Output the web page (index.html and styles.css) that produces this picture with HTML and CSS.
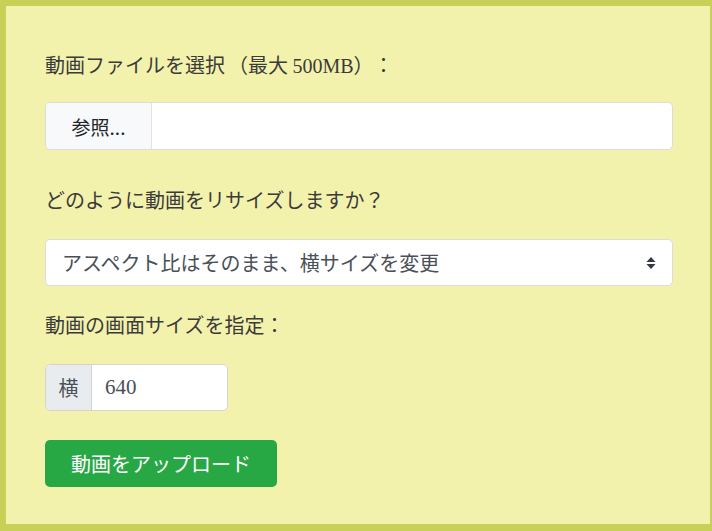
FILE: index.html
```html
<!DOCTYPE html>
<html lang="ja">
<head>
    <meta charset="UTF-8">
    <meta name="viewport" content="width=device-width, initial-scale=1.0">
    <title>動画リサイズ</title>
    <link rel="stylesheet" href="styles.css">
</head>
<body>

<div class="upload-box">
    <form class="upload-form">
        <!-- File -->
        <label class="field-label label-file">動画ファイルを選択<span class="note">（最大 <span class="latin">500MB</span>）</span>：</label>
        <div class="file-input">
            <span class="file-button">参照...</span>
            <span class="file-name"></span>
        </div>

        <!-- Resize mode -->
        <label class="field-label label-mode">どのように動画をリサイズしますか？</label>
        <div class="select-box">
            <span>アスペクト比はそのまま、横サイズを変更</span>
            <svg class="select-arrows" width="10" height="14" viewBox="0 0 10 14">
                <path d="M5 1 L9.5 6 L0.5 6 Z" fill="#343a40"/>
                <path d="M0.5 8 L9.5 8 L5 13 Z" fill="#343a40"/>
            </svg>
        </div>

        <!-- Size -->
        <label class="field-label label-size">動画の画面サイズを指定：</label>
        <div class="size-group">
            <span class="size-prepend">横</span>
            <span class="size-value">640</span>
        </div>

        <button type="button" class="upload-button">動画をアップロード</button>
    </form>
</div>

</body>
</html>
```

FILE: styles.css
```css
body {
    margin: 0;
    font-family: "Noto Sans CJK JP", "Liberation Sans", sans-serif;
    font-size: 20px;
    color: #3b3b3b;
    overflow: hidden;
    text-spacing-trim: space-all;
}

.upload-box {
    height: 531px;
    box-sizing: border-box;
    background-color: #f3f2ad;
    border: 6px solid #c9d057;
    border-right-width: 2px;
    border-bottom-width: 7px;
    padding: 36px 37px 0 39px;
}

.upload-form {
    display: flex;
    flex-direction: column;
    align-items: flex-start;
}

.field-label {
    display: block;
    line-height: 30px;
    height: 30px;
}

.label-file {
    margin-top: 8px;
    margin-bottom: 22px;
}

.label-file .note {
    margin-left: 3px;
}

.label-mode {
    margin-top: 35px;
    margin-bottom: 24px;
}

.label-size {
    margin-top: 24px;
    margin-bottom: 24px;
}

.latin {
    font-family: "Liberation Serif", serif;
}

.file-input {
    display: flex;
    width: 628px;
    height: 48px;
    box-sizing: border-box;
    background-color: #fff;
    border: 1px solid #dcdcdc;
    border-radius: 5px;
    overflow: hidden;
}

.file-button {
    width: 106px;
    box-sizing: border-box;
    background-color: #f8f9fa;
    border-right: 1px solid #e3e3e3;
    color: #212529;
    display: flex;
    align-items: center;
    justify-content: center;
    font-size: 19px;
}

.select-box {
    display: flex;
    align-items: center;
    justify-content: space-between;
    width: 628px;
    height: 47px;
    box-sizing: border-box;
    background-color: #fff;
    border: 1px solid #dcdcdc;
    border-radius: 5px;
    padding: 0 16px 0 16px;
    color: #495057;
}

.size-group {
    display: flex;
    width: 183px;
    height: 47px;
    box-sizing: border-box;
    border: 1px solid #d4d4d4;
    border-radius: 5px;
    overflow: hidden;
    background-color: #fff;
}

.size-prepend {
    width: 45px;
    background-color: #e9ecef;
    border-right: 1px solid #d4d4d4;
    color: #495057;
    display: flex;
    align-items: center;
    justify-content: center;
}

.size-value {
    display: flex;
    align-items: center;
    padding-left: 13px;
    font-family: "Liberation Serif", serif;
    font-size: 21px;
    color: #495057;
}

.upload-button {
    margin-top: 29px;
    width: 232px;
    height: 47px;
    background-color: #28a745;
    color: #fff;
    border: none;
    border-radius: 5px;
    font-family: "Noto Sans CJK JP", "Liberation Sans", sans-serif;
    font-size: 20px;
    padding: 0;
}
```
